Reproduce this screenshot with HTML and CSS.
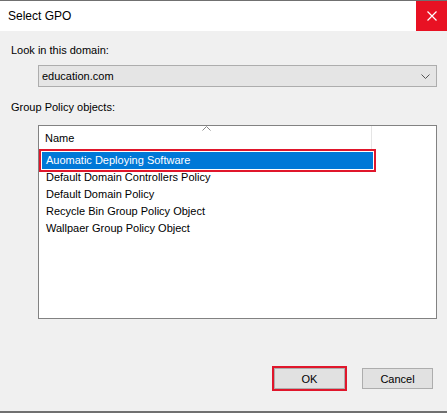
FILE: index.html
```html
<!DOCTYPE html>
<html lang="en">
<head>
    <meta charset="UTF-8">
    <title>Select GPO</title>
    <link rel="stylesheet" href="styles.css">
</head>
<body>
    <div class="dialog">
        <div class="titlebar">
            <span class="title">Select GPO</span>
            <div class="close">
                <svg width="10" height="10" viewBox="0 0 10 10">
                    <path d="M0.5 0.5 L9.5 9.5 M9.5 0.5 L0.5 9.5" stroke="#fff" stroke-width="1.2"/>
                </svg>
            </div>
        </div>
        <div class="content">
            <div class="label">Look in this domain:</div>
            <div class="combo">
                <span>education.com</span>
                <svg class="chevron" width="9" height="5" viewBox="0 0 9 5">
                    <path d="M0.5 0.5 L4.5 4.5 L8.5 0.5" stroke="#555" stroke-width="1" fill="none"/>
                </svg>
            </div>
            <div class="label">Group Policy objects:</div>
            <div class="list">
                <div class="list-head">
                    <div class="col-name">
                        <svg class="sort" width="9" height="5" viewBox="0 0 9 5">
                            <path d="M0.5 4.5 L4.5 0.5 L8.5 4.5" stroke="#888" stroke-width="1" fill="none"/>
                        </svg>
                        Name
                    </div>
                    <div class="col-rest"></div>
                </div>
                <div class="rows">
                    <div class="row selected">Auomatic Deploying Software</div>
                    <div class="row">Default Domain Controllers Policy</div>
                    <div class="row">Default Domain Policy</div>
                    <div class="row">Recycle Bin Group Policy Object</div>
                    <div class="row">Wallpaer Group Policy Object</div>
                </div>
            </div>
            <div class="buttons">
                <div class="btn-wrap marked"><button class="btn">OK</button></div>
                <div class="btn-wrap"><button class="btn">Cancel</button></div>
            </div>
        </div>
    </div>
</body>
</html>
```

FILE: styles.css
```css
body {
    margin: 0;
    font-family: "Liberation Sans", Arial, sans-serif;
    font-size: 11px;
    color: #000;
    background: #f0f0f0;
}
.dialog {
    width: 447px;
    height: 413px;
    box-sizing: border-box;
    border-top: 1px solid #707070;
    border-bottom: 2px solid #707070;
    display: flex;
    flex-direction: column;
    background: #f0f0f0;
}
.titlebar {
    height: 30px;
    background: #fff;
    display: flex;
    align-items: center;
    justify-content: space-between;
}
.title {
    padding-left: 8px;
    font-size: 12px;
}
.close {
    width: 31px;
    height: 30px;
    background: #e81123;
    display: flex;
    align-items: center;
    justify-content: center;
}
.content {
    flex: 1;
    padding: 11px 10px 0 11px;
    display: flex;
    flex-direction: column;
}
.label {
    height: 16px;
    line-height: 16px;
}
.combo {
    margin: 7px 0 12px 27px;
    height: 20px;
    border: 1px solid #adadad;
    background: #e5e5e5;
    display: flex;
    align-items: center;
    justify-content: space-between;
    padding: 0 6px 0 3px;
}
.chevron {
    display: block;
}
.list {
    margin: 10px 0 0 27px;
    height: 192px;
    border: 1px solid #828282;
    background: #fff;
    display: flex;
    flex-direction: column;
}
.list-head {
    height: 23px;
    display: flex;
}
.col-name {
    position: relative;
    width: 333px;
    border-right: 1px solid #e5e5e5;
    padding: 6px 0 0 6px;
    box-sizing: border-box;
}
.sort {
    position: absolute;
    left: 163px;
    top: 0;
}
.rows {
    padding: 3px 0 0 1px;
}
.row {
    width: 331px;
    height: 17px;
    line-height: 17px;
    padding-left: 4px;
    box-sizing: border-box;
    margin-left: 2px;
}
.row.selected {
    background: #0078d7;
    color: #fff;
    outline: 2px solid #e0162b;
    outline-offset: 1px;
}
.buttons {
    margin-top: auto;
    margin-bottom: 20px;
    display: flex;
    justify-content: flex-end;
    gap: 13px;
    padding-right: 2px;
}
.btn-wrap {
    padding: 2px;
}
.btn-wrap.marked {
    border: 2px solid #e0162b;
    padding: 0;
}
.btn {
    display: block;
    width: 71px;
    height: 21px;
    border: 1px solid #adadad;
    background: #e1e1e1;
    font: inherit;
    color: #000;
    padding: 0;
}
```
